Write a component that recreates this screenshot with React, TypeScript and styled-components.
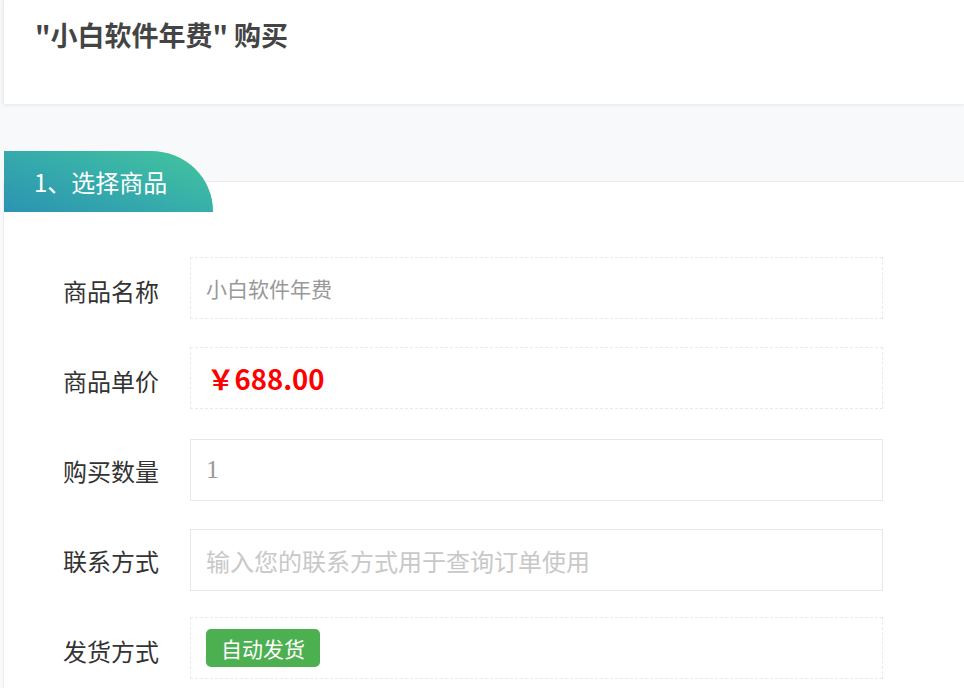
import React from "react";
import styled, { createGlobalStyle } from "styled-components";

const GlobalStyle = createGlobalStyle`
  html, body {
    margin: 0;
    padding: 0;
    background: #f8f9fb;
    font-family: "Noto Sans CJK SC", "Noto Sans", sans-serif;
    overflow: hidden;
  }
`;

const Page = styled.div`
  padding-left: 3px;
  width: 100%;
  box-sizing: border-box;
`;

const Header = styled.div`
  background: #fff;
  height: 104px;
  border-left: 1px solid #ececf0;
  box-shadow: 0 1px 4px rgba(0, 0, 0, 0.08);
  padding: 17px 0 0 31px;
  box-sizing: border-box;
`;

const Title = styled.h1`
  margin: 0;
  font-size: 27px;
  line-height: 36px;
  font-weight: 700;
  color: #444;
`;

const Section = styled.div`
  margin-top: 77px;
  background: #fff;
  border-top: 1px solid #ebebee;
  border-left: 1px solid #ececf0;
  min-height: 520px;
`;

const Tab = styled.div`
  margin-top: -31px;
  width: 209px;
  height: 61px;
  box-sizing: border-box;
  padding-left: 30px;
  display: flex;
  align-items: center;
  border-top-right-radius: 62px 60px;
  background: linear-gradient(20deg, #2c93b2 0%, #36adab 50%, #44c69b 100%);
  color: #fff;
  font-size: 24px;
`;

const Form = styled.div`
  padding: 45px 0 0 59px;
  display: flex;
  flex-direction: column;
  gap: 28px;
`;

const Row = styled.div`
  display: flex;
  align-items: center;
`;

const Label = styled.div`
  width: 127px;
  font-size: 24px;
  color: #333;
  padding-top: 4px;
`;

const Field = styled.div<{ $dashed?: boolean }>`
  width: 693px;
  height: 62px;
  box-sizing: border-box;
  border: 1px ${(p) => (p.$dashed ? "dashed #e9e9e9" : "solid #e8e8e8")};
  margin: ${(p) => (p.$dashed ? "0" : "2px 0 -2px")};
  padding-left: 15px;
  display: flex;
  align-items: center;
`;

const StaticText = styled.span`
  font-size: 21px;
  color: #999;
`;

const Price = styled.span`
  font-size: 27.5px;
  font-weight: 700;
  color: #ff0000;
  padding-left: 1px;
`;

const Input = styled.input<{ $serif?: boolean }>`
  border: none;
  outline: none;
  width: 100%;
  padding: 0;
  background: transparent;
  font-size: ${(p) => (p.$serif ? "26px" : "24px")};
  font-family: ${(p) =>
    p.$serif ? `"Liberation Serif", serif` : `"Noto Sans CJK SC", sans-serif`};
  color: #999;
  &::placeholder {
    color: #c8c8c8;
  }
`;

const Badge = styled.span`
  display: inline-flex;
  align-items: center;
  justify-content: center;
  width: 114px;
  height: 38px;
  border-radius: 5px;
  background: #4caf50;
  color: #fff;
  font-size: 21px;
`;

export default function App() {
  return (
    <>
      <GlobalStyle />
      <Page>
        <Header>
          <Title>"小白软件年费" 购买</Title>
        </Header>
        <Section>
          <Tab>1、选择商品</Tab>
          <Form>
            <Row>
              <Label>商品名称</Label>
              <Field $dashed>
                <StaticText>小白软件年费</StaticText>
              </Field>
            </Row>
            <Row>
              <Label>商品单价</Label>
              <Field $dashed>
                <Price>￥688.00</Price>
              </Field>
            </Row>
            <Row>
              <Label>购买数量</Label>
              <Field>
                <Input $serif defaultValue="1" />
              </Field>
            </Row>
            <Row>
              <Label>联系方式</Label>
              <Field>
                <Input placeholder="输入您的联系方式用于查询订单使用" />
              </Field>
            </Row>
            <Row>
              <Label>发货方式</Label>
              <Field $dashed>
                <Badge>自动发货</Badge>
              </Field>
            </Row>
          </Form>
        </Section>
      </Page>
    </>
  );
}
